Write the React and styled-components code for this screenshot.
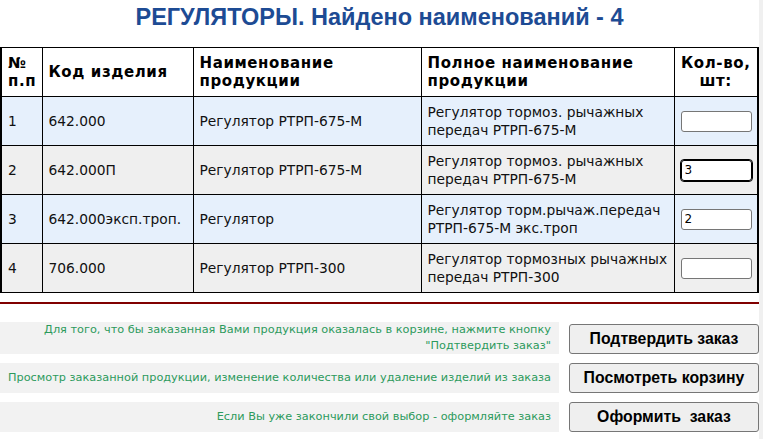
import React from "react"
import styled, { createGlobalStyle } from "styled-components"

const Global = createGlobalStyle`
    html, body {
        margin: 0;
        padding: 0;
        background: #ffffff;
    }
    body {
        font-family: "DejaVu Sans", Verdana, sans-serif;
    }
`

const Page = styled.div`
    display: flex;
    width: 763px;
    height: 439px;
    overflow: hidden;
`

const Main = styled.div`
    flex: 1;
    display: flex;
    flex-direction: column;
`

const Track = styled.div`
    width: 6px;
    background: #f0f0f0;
`

const Title = styled.h1`
    margin: 4px 0 0 0;
    height: 43px;
    text-align: center;
    font-family: "Liberation Sans", Arial, sans-serif;
    font-size: 23.5px;
    font-weight: bold;
    color: #1d4b94;
    line-height: 26px;
`

const Table = styled.table`
    width: 757px;
    border-collapse: collapse;
    table-layout: fixed;
    border: 2px solid #000;
    border-top-width: 1px;
    border-bottom-width: 1px;
`

const Head = styled.th`
    border: 1px solid #000;
    padding: 5px 6px;
    height: 38px;
    text-align: ${p => (p.$center ? "center" : "left")};
    font-size: 15px;
    letter-spacing: 0.6px;
    font-weight: bold;
    line-height: 18px;
    color: #000;
    background: #fff;
    vertical-align: middle;
`

const Row = styled.tr`
    background: ${p => (p.$odd ? "#e6f0fc" : "#efefef")};
`

const Cell = styled.td`
    border: 1px solid #000;
    padding: ${p => (p.$center ? "5px 6px" : "5px 3px 5px 6px")};
    height: 38px;
    font-size: 13.8px;
    line-height: 18px;
    color: #111;
    vertical-align: middle;
    text-align: ${p => (p.$center ? "center" : "left")};
`

const Qty = styled.input`
    box-sizing: border-box;
    width: 71px;
    height: 21px;
    padding: 0 3px;
    border: 1px solid ${p => (p.$focus ? "#000" : "#767676")};
    outline: ${p => (p.$focus ? "1px solid #000" : "none")};
    border-radius: 3px;
    background: #fff;
    font-family: "DejaVu Sans", sans-serif;
    font-size: 12px;
    color: #000;
`

const Divider = styled.hr`
    margin: 9px 0 0 0;
    border: none;
    height: 2px;
    background: #800000;
`

const Actions = styled.div`
    display: grid;
    grid-template-columns: 1fr 190px;
    column-gap: 10px;
    row-gap: 9px;
    margin-top: 18px;
    align-items: end;
`

const Note = styled.div`
    background: #f2f2f2;
    height: ${p => p.$h}px;
    display: flex;
    flex-direction: column;
    justify-content: center;
    align-items: flex-end;
    padding-right: 8px;
    font-size: 11.3px;
    line-height: 16px;
    color: #2c9a5c;
    text-align: right;
    white-space: nowrap;
`

const Button = styled.button`
    box-sizing: border-box;
    width: 190px;
    height: 30px;
    border: 1px solid #767676;
    border-radius: 3px;
    background: #efefef;
    font-family: "Liberation Sans", Arial, sans-serif;
    font-size: 15.8px;
    font-weight: bold;
    color: #000;
    white-space: pre;
`

const items = [
    { n: 1, code: "642.000", name: "Регулятор РТРП-675-М", full: "Регулятор тормоз. рычажных передач РТРП-675-М", qty: "" },
    { n: 2, code: "642.000П", name: "Регулятор РТРП-675-М", full: "Регулятор тормоз. рычажных передач РТРП-675-М", qty: "3", focus: true },
    { n: 3, code: "642.000эксп.троп.", name: "Регулятор", full: "Регулятор торм.рычаж.передач РТРП-675-М экс.троп", qty: "2" },
    { n: 4, code: "706.000", name: "Регулятор РТРП-300", full: "Регулятор тормозных рычажных передач РТРП-300", qty: "" },
]

const App = () => (
    <Page>
        <Global />
        <Main>
            <Title>РЕГУЛЯТОРЫ. Найдено наименований - 4</Title>
            <Table>
                <colgroup>
                    <col style={{ width: 41 }} />
                    <col style={{ width: 151 }} />
                    <col style={{ width: 228 }} />
                    <col style={{ width: 253 }} />
                    <col style={{ width: 84 }} />
                </colgroup>
                <thead>
                    <tr>
                        <Head>№<br />п.п</Head>
                        <Head>Код изделия</Head>
                        <Head>Наименование<br />продукции</Head>
                        <Head>Полное наименование<br />продукции</Head>
                        <Head $center>Кол-во,<br />шт:</Head>
                    </tr>
                </thead>
                <tbody>
                    {items.map(it => (
                        <Row key={it.n} $odd={it.n % 2 === 1}>
                            <Cell>{it.n}</Cell>
                            <Cell>{it.code}</Cell>
                            <Cell>{it.name}</Cell>
                            <Cell>{it.full}</Cell>
                            <Cell $center>
                                <Qty defaultValue={it.qty} $focus={it.focus} />
                            </Cell>
                        </Row>
                    ))}
                </tbody>
            </Table>
            <Divider />
            <Actions>
                <Note $h={32}>
                    <span>Для того, что бы заказанная Вами продукция оказалась в корзине, нажмите кнопку</span>
                    <span>"Подтвердить заказ"</span>
                </Note>
                <Button>Подтвердить заказ</Button>
                <Note $h={30}>Просмотр заказанной продукции, изменение количества или удаление изделий из заказа</Note>
                <Button>Посмотреть корзину</Button>
                <Note $h={30}>Если Вы уже закончили свой выбор - оформляйте заказ</Note>
                <Button>{"Оформить  заказ"}</Button>
            </Actions>
        </Main>
        <Track />
    </Page>
)

export default App
